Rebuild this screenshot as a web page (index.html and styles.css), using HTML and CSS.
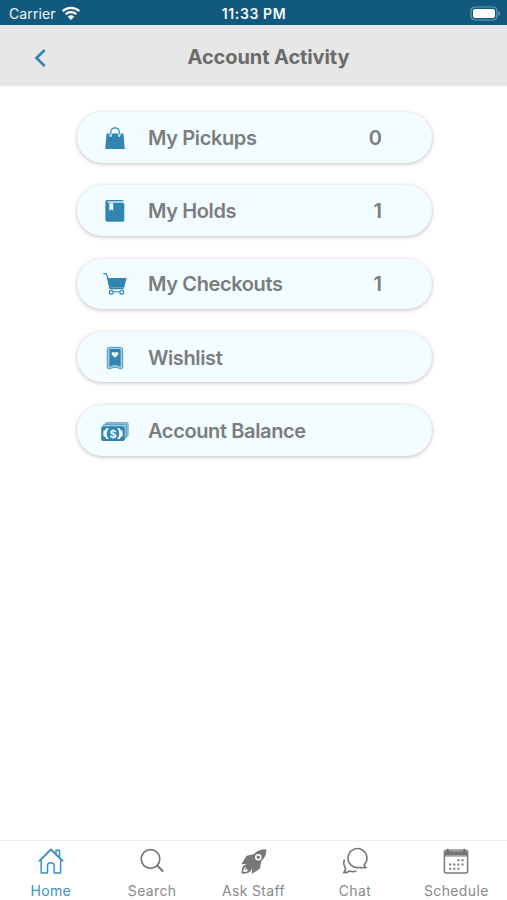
FILE: index.html
```html
<!DOCTYPE html>
<html lang="en">
<head>
    <meta charset="UTF-8">
    <meta name="viewport" content="width=device-width, initial-scale=1.0">
    <title>Account Activity</title>
    <link rel="stylesheet" href="styles.css">
</head>
<body>
    <div class="status-bar">
        <div class="carrier">
            <span class="carrier-name">Carrier</span>
            <svg class="wifi" width="20" height="14" viewBox="0 0 20 14">
                <path d="M1.700 5.200a12 12 0 0 1 16.600 0" fill="none" stroke="#fff" stroke-width="2.300"/>
                <path d="M4.600 8.200a7.800 7.800 0 0 1 10.800 0" fill="none" stroke="#fff" stroke-width="2.200"/>
                <path d="M10 14L6.700 10.700a4.700 4.700 0 0 1 6.600 0z" fill="#fff"/>
            </svg>
        </div>
        <span class="clock">11:33 PM</span>
        <svg class="battery" width="31" height="15" viewBox="0 0 31 15">
            <rect x="1" y="1" width="26" height="13" rx="4" fill="none" stroke="#6f9db9" stroke-width="1.200"/>
            <rect x="3" y="3" width="22" height="9" rx="2" fill="#fff"/>
            <path d="M28.500 5.200c2 .8 2 3.800 0 4.600z" fill="#6f9db9"/>
        </svg>
    </div>

    <header class="header">
        <svg class="back" width="14" height="20" viewBox="0 0 14 20">
            <path d="M11.700 2L3.500 10l8.200 8" fill="none" stroke="#3085b5" stroke-width="2.600"/>
        </svg>
        <h1>Account Activity</h1>
    </header>

    <main class="menu">
        <a class="menu-item">
            <svg class="icon" viewBox="0 0 28 24">
                <path d="M5.600 7.400h16.800L23.800 23H4.200z" fill="#3085b1"/>
                <path d="M9.800 9.500V6a4.200 4.200 0 0 1 8.400 0v3.500" fill="none" stroke="#f3fcff" stroke-width="2.600"/>
                <path d="M9.800 9V6a4.200 4.200 0 0 1 8.400 0v3" fill="none" stroke="#3085b1" stroke-width="1.200"/>
                <circle cx="9.800" cy="9.700" r="1.200" fill="#c5e2ef"/>
                <circle cx="18.200" cy="9.700" r="1.200" fill="#c5e2ef"/>
            </svg>
            <span class="label">My Pickups</span>
            <span class="count">0</span>
        </a>
        <a class="menu-item">
            <svg class="icon" viewBox="0 0 28 24">
                <path d="M6.500 1h15.700v1.200H7.200c-1.100 0-1.100 1.600 0 1.600h14.600c.9 0 1.500.6 1.500 1.500v15.900c0 .9-.6 1.500-1.500 1.500H6.500c-1.100 0-2.100-.8-2.100-2V3.200C4.400 1.900 5.300 1 6.500 1z" fill="#3085b1"/>
                <path d="M7 3h14.800" stroke="#8fbfd8" stroke-width=".8"/>
                <path d="M8.300 4.300h3.900v7.400l-1.950-1.400-1.950 1.400z" fill="#f3fcff"/>
            </svg>
            <span class="label">My Holds</span>
            <span class="count">1</span>
        </a>
        <a class="menu-item">
            <svg class="icon" viewBox="0 0 28 24">
                <path d="M2.300 1.600h2.500c.5 0 .8.300.9.800l3.400 14.200h13.600" fill="none" stroke="#3085b1" stroke-width="1.300"/>
                <path d="M6.300 6h19.200l-2.300 9.800H8.600z" fill="#3085b1"/>
                <g fill="#f3fcff" stroke="#3085b1" stroke-width="1.200">
                    <circle cx="10.300" cy="20.300" r="1.900"/>
                    <circle cx="20.700" cy="20.300" r="1.900"/>
                </g>
                <path d="M12.200 19.800h6.600" stroke="#3085b1" stroke-width="1"/>
            </svg>
            <span class="label">My Checkouts</span>
            <span class="count">1</span>
        </a>
        <a class="menu-item">
            <svg class="icon" viewBox="0 0 28 24">
                <path d="M8.700 1.300h10.600a2.400 2.400 0 0 1 2.400 2.400v17.300c0 1.700-1.300 2.300-2.800 1.500L14 21.100l-4.900 1.400c-1.500.8-2.800.2-2.800-1.500V3.700a2.400 2.400 0 0 1 2.400-2.400z" fill="#a5cce0" stroke="#4c96bd" stroke-width="1" stroke-linejoin="round"/>
                <path d="M9.700 3h8.600c.8 0 1.300.5 1.300 1.300v16.400L14 18.700l-5.600 2V4.300c0-.8.500-1.300 1.300-1.300z" fill="#3085b1"/>
                <path d="M14 11.800l-3.100-3c-1.500-1.900 1.400-4 3.100-1.900 1.700-2.100 4.600 0 3.100 1.900z" fill="#f3fcff"/>
            </svg>
            <span class="label">Wishlist</span>
        </a>
        <a class="menu-item">
            <svg class="icon icon-cash" viewBox="0 0 28 24">
                <rect x="4.200" y="2.600" width="23" height="14" rx="1.500" fill="#8fc0d8" stroke="#5fa3c5" stroke-width=".8"/>
                <rect x="2.300" y="4.400" width="23" height="14" rx="1.500" fill="#a7cfe2" stroke="#4b96bd" stroke-width=".8"/>
                <rect x=".2" y="6.200" width="23.600" height="14.800" rx="1.800" fill="#3085b1"/>
                <path d="M6.600 8.300H5.200c-.3 1.400-1.300 2.400-2.800 2.700v5.200c1.500.3 2.500 1.300 2.800 2.700h2.700c-2.700-3.200-2.900-7.200 0-10.600zM17.400 8.300h1.400c.3 1.400 1.300 2.400 2.800 2.700v5.200c-1.500.3-2.500 1.300-2.800 2.700h-2.700c2.700-3.200 2.900-7.200 0-10.600z" fill="#f3fcff"/>
                <text class="dollar" x="12" y="17.600">$</text>
            </svg>
            <span class="label">Account Balance</span>
        </a>
    </main>

    <nav class="tabs">
        <a class="tab active">
            <svg width="28" height="28" viewBox="0 0 28 28" fill="none" stroke="currentColor" stroke-width="1.500" stroke-linejoin="round">
                <path d="M4.200 13.200V26h6.300v-7c0-2.100 1.300-3.200 3.300-3.200s3.300 1.100 3.300 3.200v7h6.500V13.200"/>
                <path d="M2 14.300L13.900 2.500 26 14.300" stroke-width="1.900"/>
                <path d="M19 7.200V3.300h3.500v7.500"/>
            </svg>
            <span>Home</span>
        </a>
        <a class="tab">
            <svg width="28" height="28" viewBox="0 0 28 28" fill="none" stroke="currentColor" stroke-width="1.700">
                <circle cx="12.500" cy="12" r="9.300"/>
                <path d="M19 18.500l6.300 6" stroke-width="2"/>
            </svg>
            <span>Search</span>
        </a>
        <a class="tab">
            <svg width="28" height="28" viewBox="0 0 28 28">
                <path d="M26.200 2.300c-5-.2-9.200 1.300-12.300 4.800L10.800 8c-2.400-.2-4 .6-5.200 2.200l-4.200 7.100c2.400-.5 4.200-.5 5.700.2-2.700.2-4.600 1.600-5.100 4.200l-.5 4.900c3.700.2 7.100-.3 8.700-2 .8-.9 1.100-1.900 1.200-2.900.7 1.500.7 3.300.2 5.300l6.500-4c1.800-1.200 2.600-2.700 2.400-5l1-4.200c3.700-3 5-6.700 4.700-11.500z" fill="currentColor"/>
                <path d="M7.100 17.500l4.300 4.200 3-1-6.300-6.200z" fill="currentColor"/>
                <circle cx="18.300" cy="10.200" r="2.500" fill="#777" stroke="#fff" stroke-width="1.500"/>
                <path d="M6 20.300c-2.100.5-2.700 2.300-2.600 4.700 2.300.1 4.300-.4 4.800-2.500l-1.600.3z" fill="#fff"/>
                <path d="M5 23l1.700-1.600" stroke="#777"/>
            </svg>
            <span>Ask Staff</span>
        </a>
        <a class="tab">
            <svg width="28" height="28" viewBox="0 0 28 28" fill="none" stroke="currentColor" stroke-width="1.600" stroke-linejoin="round">
                <path d="M22.900 18.100a9.500 9.500 0 1 0-4.900 2.400c1.700-.3 2.900.7 7.100.2-1.400-1-1.900-1.600-2.200-2.600z"/>
                <path d="M3.600 12.600c-1.300 2.800-1 5.500.8 7.900.2 2-.5 3.800-1.700 5.200 2.100.1 4.200-.5 5.900-1.700 2.300 1 4.500 1 6.700.1"/>
            </svg>
            <span>Chat</span>
        </a>
        <a class="tab">
            <svg width="28" height="28" viewBox="0 0 28 28" fill="none" stroke="currentColor">
                <rect x="2.400" y="3.300" width="23.200" height="22.700" rx="2" stroke-width="1.500"/>
                <path d="M3 6.400h22" stroke-width="4.600"/>
                <path d="M3 3.900h22" stroke-width="1" stroke="#aaa"/>
                <path d="M3 9.300h22" stroke-width="1" stroke="#aaa"/>
                <path d="M5.800 2.800v2.500M22.200 2.800v2.500" stroke="#666" stroke-width="2" stroke-linecap="round"/>
                <path d="M15.400 13.300h8" stroke-width="2" stroke-dasharray="2 2.100"/>
                <path d="M7.200 17.500h16" stroke-width="2" stroke-dasharray="2 2.100"/>
                <path d="M7.200 21.700h12" stroke-width="2" stroke-dasharray="2 2.100"/>
            </svg>
            <span>Schedule</span>
        </a>
    </nav>
</body>
</html>
```

FILE: styles.css
```css
* {
    box-sizing: border-box;
}

body {
    display: flex;
    flex-direction: column;
    height: 100vh;
    margin: 0;
    background-color: #fff;
    font-family: Inter, "Liberation Sans", sans-serif;
    color: #7a7c7d;
}

.status-bar {
    display: grid;
    grid-template-columns: 1fr auto 1fr;
    align-items: center;
    height: 25px;
    padding: 2px 6px 0 9px;
    background-color: #11597f;
    color: #f3f8fb;
    font-size: 14px;
}

.carrier {
    display: flex;
    align-items: center;
    gap: 5px;
}

.wifi {
    margin-bottom: 2px;
}

.carrier-name {
    letter-spacing: 0.1px;
}

.clock {
    margin-left: -2px;
    font-weight: 600;
    letter-spacing: 0.6px;
}

.battery {
    justify-self: end;
    margin-bottom: 1px;
}

.header {
    display: grid;
    grid-template-columns: 1fr auto 1fr;
    align-items: center;
    height: 61px;
    padding: 2px 3px 0 33px;
    background-color: #e7e7e7;
}

.back {
    margin-top: 2px;
}

.header h1 {
    margin: 0;
    font-size: 20px;
    font-weight: 700;
    letter-spacing: -0.1px;
    color: #6b6b6b;
}

.menu {
    display: flex;
    flex-direction: column;
    flex: 1;
    gap: 23.3px;
    padding: 26px 75px 0 77px;
}

.menu-item {
    display: flex;
    align-items: center;
    height: 50.5px;
    margin-bottom: -0.5px;
    padding: 1px 50px 0 24px;
    border-radius: 26px;
    background-color: #f3fcff;
    box-shadow: 0 1px 4px rgba(0, 0, 0, 0.25);
    font-size: 20px;
    font-weight: 600;
    letter-spacing: -0.38px;
}

.icon {
    width: 28px;
    height: 24px;
    margin-right: 19px;
}

.icon-cash {
    margin-top: 2px;
}

.dollar {
    font-size: 11px;
    font-weight: 700;
    letter-spacing: 0;
    text-anchor: middle;
    fill: #f3fcff;
}

.label {
    flex: 1;
}

.count {
    letter-spacing: 0;
}

.tabs {
    display: flex;
    height: 60px;
    border-top: 1px solid #ebebeb;
}

.tab {
    display: flex;
    flex: 1;
    flex-direction: column;
    align-items: center;
    gap: 7px;
    padding-top: 6px;
    color: #777;
    font-size: 14px;
    line-height: 18px;
    letter-spacing: 0.35px;
}

.tab span {
    color: #8a8a8a;
}

.tab.active,
.active span {
    color: #3d91c0;
}
```
